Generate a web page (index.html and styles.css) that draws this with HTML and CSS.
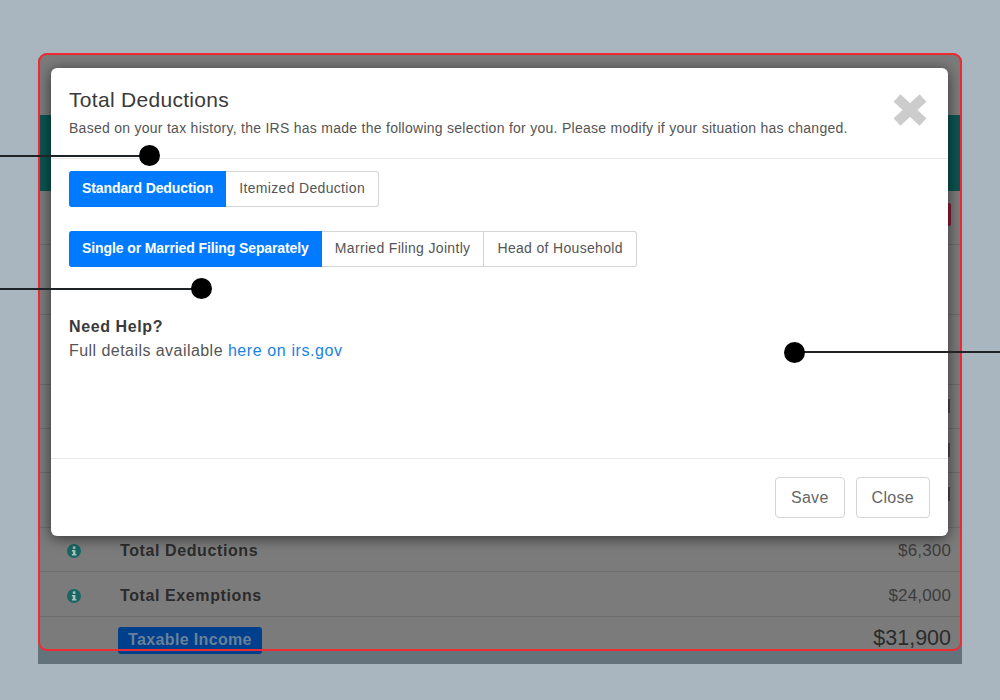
FILE: index.html
```html
<!DOCTYPE html>
<html lang="en">
<head>
    <meta charset="UTF-8">
    <title>Total Deductions</title>
    <link rel="stylesheet" href="styles.css">
</head>
<body>
    <div class="shot">
        <div class="frame">
            <div class="banner"></div>
            <div class="row row-54"><span class="peek peek-red"></span></div>
            <div class="row row-70"></div>
            <div class="row row-70"></div>
            <div class="row row-44"><span class="peek"></span></div>
            <div class="row row-44"><span class="peek"></span></div>
            <div class="row row-55"><span class="peek"></span></div>
            <div class="row row-44">
                <svg class="info" viewBox="0 0 14 14"><circle cx="7" cy="7" r="7"/><rect x="5.8" y="2.4" width="2.6" height="2.4"/><path d="M4.9 5.9h3.5v4.2h1v1.5H4.9v-1.5h1V7.4h-1z"/></svg>
                <span class="label">Total Deductions</span>
                <span class="val">$6,300</span>
            </div>
            <div class="row row-45">
                <svg class="info" viewBox="0 0 14 14"><circle cx="7" cy="7" r="7"/><rect x="5.8" y="2.4" width="2.6" height="2.4"/><path d="M4.9 5.9h3.5v4.2h1v1.5H4.9v-1.5h1V7.4h-1z"/></svg>
                <span class="label">Total Exemptions</span>
                <span class="val">$24,000</span>
            </div>
            <div class="row row-last">
                <span class="badge">Taxable Income</span>
                <span class="val val-big">$31,900</span>
            </div>
        </div>

        <div class="modal">
            <div class="modal-head">
                <div>
                    <h4>Total Deductions</h4>
                    <p>Based on your tax history, the IRS has made the following selection for you. Please modify if your situation has changed.</p>
                </div>
                <svg class="close-x" viewBox="0 0 36 34"><path d="M5 5 31 29M31 5 5 29"/></svg>
            </div>
            <div class="modal-body">
                <div class="btn-group">
                    <span class="seg active">Standard Deduction</span>
                    <span class="seg">Itemized Deduction</span>
                </div>
                <div class="btn-group">
                    <span class="seg active">Single or Married Filing Separately</span>
                    <span class="seg">Married Filing Jointly</span>
                    <span class="seg">Head of Household</span>
                </div>
                <div class="help">
                    <b>Need Help?</b>
                    <div>Full details available <a href="#">here on irs.gov</a></div>
                </div>
            </div>
            <div class="modal-foot">
                <span class="btn">Save</span>
                <span class="btn">Close</span>
            </div>
        </div>
    </div>

    <div class="callout callout-1"></div>
    <div class="callout callout-2"></div>
    <div class="callout callout-3"></div>
</body>
</html>
```

FILE: styles.css
```css
*{
    margin: 0px;
    padding: 0px;
    box-sizing: border-box;
}
html,body{
    height: 700px;
    overflow: hidden;
}
body{
    background-color: #a9b6bf;
    font-family: "Liberation Sans", Arial, sans-serif;
    padding: 53px 38px 0;
    position: relative;
}

/* page behind the dialog */
.shot{
    position: relative;
    height: 611px;
    background: linear-gradient(transparent 50%, #64727c 50%);
}
.frame{
    position: relative;
    height: 598px;
    background-color: #7b7b7b;
    border-radius: 9px;
    padding-top: 62px;
}
.frame::after{
    content: "";
    position: absolute;
    inset: 0;
    border: 2px solid #ee2a33;
    border-radius: 9px;
}
.banner{
    height: 76px;
    background-color: #0b5452;
}
.row{
    display: flex;
    align-items: center;
    padding: 3px 11px 0 29px;
    border-bottom: 1px solid #6c6c6c;
    position: relative;
}
.row-44{height: 44px;}
.row-45{height: 45px;}
.row-54{height: 54px;}
.row-55{height: 55px;}
.row-70{height: 70px;}
.row-last{
    height: 34px;
    border-bottom: none;
    padding: 0 11px 0 80px;
    align-items: flex-start;
}
.info{
    width: 14px;
    height: 14px;
    margin-right: 39px;
    fill: #1a6663;
}
.info rect,.info path{
    fill: #a9c0bd;
}
.label{
    font-size: 16px;
    font-weight: bold;
    letter-spacing: .6px;
    color: #2b2b2b;
}
.val{
    margin-left: auto;
    font-size: 17px;
    letter-spacing: .15px;
    color: #3d3d3d;
}
.val-big{
    font-size: 21.5px;
    line-height: 24px;
    letter-spacing: 0;
    color: #2b2b2b;
    margin-top: 9px;
}
.badge{
    font-size: 16px;
    font-weight: bold;
    letter-spacing: .35px;
    color: #6a8098;
    background-color: #003f8c;
    border-radius: 3px;
    width: 144px;
    height: 27px;
    line-height: 25px;
    text-align: center;
    margin-top: 10px;
}
.peek{
    position: absolute;
    right: 12px;
    top: 14px;
    width: 2px;
    height: 14px;
    background-color: #4a4a4a;
}
.peek-red{
    right: 11px;
    top: 12px;
    width: 3px;
    height: 23px;
    background-color: #8d1d36;
    border-radius: 0 2px 2px 0;
}

/* dialog */
.modal{
    position: absolute;
    left: 13px;
    top: 15px;
    width: 897px;
    height: 468px;
    background-color: white;
    border-radius: 6px;
    box-shadow: 0 2px 14px rgba(0, 0, 0, .6);
    display: flex;
    flex-direction: column;
}
.modal-head{
    height: 91px;
    padding: 20px 20px 0 18px;
    border-bottom: 1px solid #e8e8e8;
    display: flex;
    justify-content: space-between;
}
.modal-head h4{
    font-size: 21px;
    font-weight: normal;
    line-height: 24px;
    letter-spacing: .3px;
    color: #3a3a3a;
}
.modal-head p{
    font-size: 14px;
    line-height: 18px;
    letter-spacing: .27px;
    margin-top: 7px;
    color: #555;
}
.close-x{
    width: 36px;
    height: 34px;
    margin-top: 5px;
    fill: none;
    stroke: #cccccc;
    stroke-width: 10;
}
.modal-body{
    flex: 1;
    padding: 12px 18px 0;
}
.btn-group{
    display: flex;
    width: max-content;
    margin-bottom: 24px;
}
.seg{
    height: 36px;
    line-height: 33px;
    padding: 0 13px;
    font-size: 14px;
    letter-spacing: .33px;
    color: #555;
    background-color: white;
    border: 1px solid #d4d4d4;
    border-left: none;
}
.seg:first-child{
    border-radius: 3px 0 0 3px;
}
.seg:last-child{
    border-radius: 0 3px 3px 0;
}
.seg.active{
    color: white;
    font-weight: bold;
    letter-spacing: -.1px;
    padding-right: 12px;
    background-color: #007bff;
    border-color: #007bff;
}
.help{
    font-size: 16px;
    line-height: 24px;
    letter-spacing: .45px;
    color: #555;
    margin-top: 48px;
}
.help b{
    color: #3a3a3a;
    letter-spacing: .6px;
}
.help a{
    color: #1a82e2;
    letter-spacing: .6px;
    text-decoration: none;
}
.modal-foot{
    height: 78px;
    border-top: 1px solid #e8e8e8;
    padding: 18px 18px 0 0;
    display: flex;
    justify-content: flex-end;
    gap: 11px;
}
.btn{
    height: 41px;
    line-height: 39px;
    padding: 0 15px;
    font-size: 16px;
    letter-spacing: .3px;
    color: #666;
    border: 1px solid #d4d4d4;
    border-radius: 4px;
}

/* annotation pins */
.callout{
    position: absolute;
    height: 2px;
    background-color: #1f2326;
}
.callout::after{
    content: "";
    position: absolute;
    top: -10px;
    width: 21px;
    height: 21px;
    border-radius: 50%;
    background-color: black;
}
.callout-1{
    left: 0;
    top: 155px;
    width: 149px;
}
.callout-2{
    left: 0;
    top: 288px;
    width: 201px;
}
.callout-1::after,.callout-2::after{
    right: -11px;
}
.callout-3{
    right: 0;
    top: 351px;
    width: 206px;
}
.callout-3::after{
    left: -10px;
    top: -9px;
}
```
